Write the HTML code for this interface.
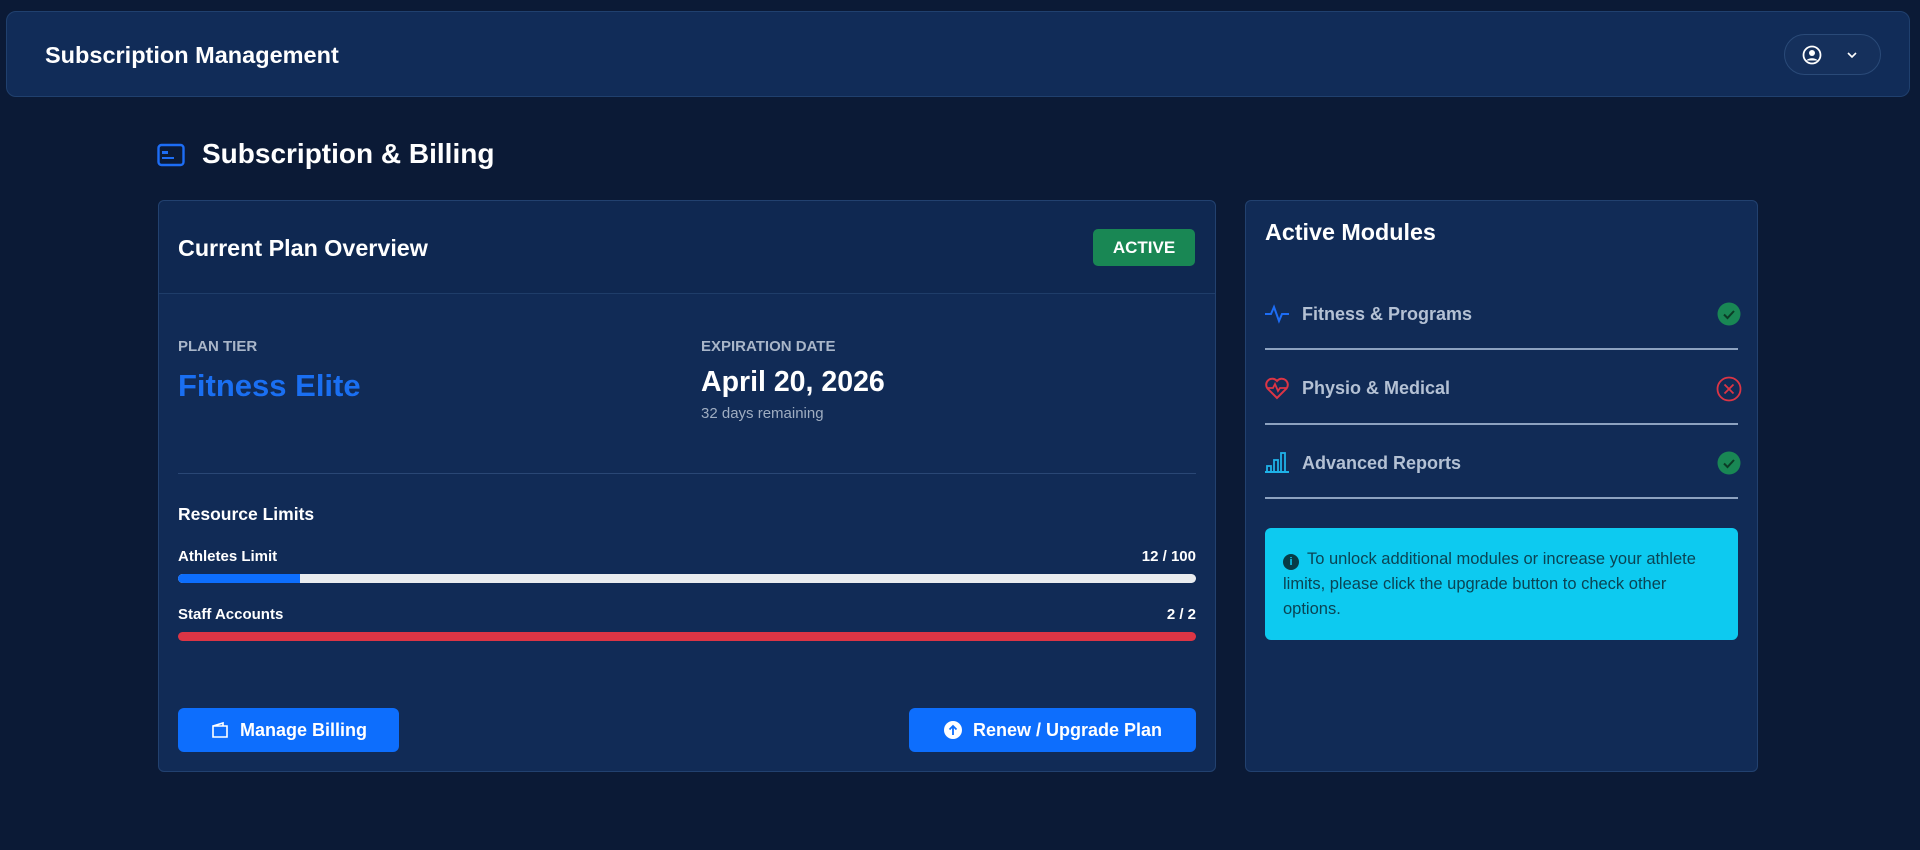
<!DOCTYPE html>
<html><head><meta charset="utf-8"><style>
*{box-sizing:border-box;margin:0;padding:0}
body{width:1920px;height:850px;background:#0b1a36;font-family:"Liberation Sans",sans-serif;color:#fff;position:relative;overflow:hidden}
.abs{position:absolute}
.hdr{left:6px;top:11px;width:1904px;height:86px;background:#112c58;border:1px solid #20406e;border-radius:10px}
.card{background:#112b56;border:1px solid #22416f;border-radius:6px}
.lbl{font-size:15px;font-weight:bold;color:#a9b6c9}
.bar{height:9px;border-radius:5px;left:178px;width:1018px}
.btn{background:#0d6efd;border-radius:6px;font-weight:bold;font-size:18px;display:flex;align-items:center;justify-content:center;gap:10px}
.mod{left:1265px;width:473px;height:0;border-top:2px solid #8da2c0}
.mt{font-size:18px;font-weight:bold;color:#b4c1d4;left:1302px}
</style></head><body>
<div class="abs hdr"></div>
<div class="abs" style="left:45px;top:42px;font-size:23.5px;font-weight:bold">Subscription Management</div>
<div class="abs" style="left:1784px;top:34px;width:97px;height:41px;border-radius:21px;background:#15305c;border:1px solid #2a4a78"></div>
<svg class="abs" style="left:1802px;top:45px" width="20" height="20" viewBox="0 0 20 20"><circle cx="10" cy="10" r="8.5" fill="none" stroke="#fff" stroke-width="1.8"/><circle cx="10" cy="8" r="3" fill="#fff"/><path d="M4.5 15.5c1.5-3 9.5-3 11 0" fill="#fff"/></svg>
<svg class="abs" style="left:1846px;top:50px" width="12" height="10" viewBox="0 0 12 10"><path d="M2 3l4 4 4-4" fill="none" stroke="#fff" stroke-width="1.6"/></svg>

<svg class="abs" style="left:157px;top:143px" width="28" height="24" viewBox="0 0 28 24"><rect x="1.5" y="2" width="25" height="20" rx="3" fill="none" stroke="#1d6df5" stroke-width="2.4"/><rect x="5" y="8" width="6" height="3" fill="#1d6df5"/><rect x="5" y="14" width="12" height="2" fill="#1d6df5"/></svg>
<div class="abs" style="left:202px;top:138px;font-size:28px;font-weight:bold">Subscription &amp; Billing</div>

<div class="abs card" style="left:158px;top:200px;width:1058px;height:572px"></div>
<div class="abs" style="left:159px;top:201px;width:1056px;height:93px;background:#0f2851;border-bottom:1px solid #1f3d69;border-radius:6px 6px 0 0"></div>
<div class="abs" style="left:178px;top:235px;font-size:23.3px;font-weight:bold">Current Plan Overview</div>
<div class="abs" style="left:1093px;top:229px;width:102px;height:37px;background:#198754;border-radius:5px;font-size:17px;font-weight:bold;display:flex;align-items:center;justify-content:center">ACTIVE</div>
<div class="abs lbl" style="left:178px;top:338px">PLAN TIER</div>
<div class="abs" style="left:178px;top:368px;font-size:31px;font-weight:bold;color:#1a6ff2">Fitness Elite</div>
<div class="abs lbl" style="left:701px;top:338px">EXPIRATION DATE</div>
<div class="abs" style="left:701px;top:366px;font-size:28.5px;font-weight:bold">April 20, 2026</div>
<div class="abs" style="left:701px;top:405px;font-size:15px;color:#9fadc1">32 days remaining</div>
<div class="abs" style="left:178px;top:473px;width:1018px;height:1px;background:#2a4775"></div>
<div class="abs" style="left:178px;top:504px;font-size:17.5px;font-weight:bold">Resource Limits</div>
<div class="abs" style="left:178px;top:548px;font-size:15px;font-weight:bold">Athletes Limit</div>
<div class="abs" style="left:1096px;top:548px;width:100px;text-align:right;font-size:15px;font-weight:bold">12 / 100</div>
<div class="abs bar" style="top:574px;background:#e9ecef"></div>
<div class="abs" style="left:178px;top:574px;width:122px;height:9px;border-radius:5px 0 0 5px;background:#0d6efd"></div>
<div class="abs" style="left:178px;top:606px;font-size:15px;font-weight:bold">Staff Accounts</div>
<div class="abs" style="left:1096px;top:606px;width:100px;text-align:right;font-size:15px;font-weight:bold">2 / 2</div>
<div class="abs bar" style="top:632px;background:#dc3545"></div>
<div class="abs btn" style="left:178px;top:708px;width:221px;height:44px"><svg width="20" height="20" viewBox="0 0 20 20"><path d="M3 6h14v11H3z M3 6l10-3v3" fill="none" stroke="#fff" stroke-width="1.6"/></svg>Manage Billing</div>
<div class="abs btn" style="left:909px;top:708px;width:287px;height:44px"><svg width="20" height="20" viewBox="0 0 20 20"><circle cx="10" cy="10" r="9" fill="#fff"/><path d="M10 15V6M6.5 9.5L10 6l3.5 3.5" fill="none" stroke="#0d6efd" stroke-width="1.8"/></svg>Renew / Upgrade Plan</div>

<div class="abs card" style="left:1245px;top:200px;width:513px;height:572px"></div>
<div class="abs" style="left:1265px;top:219px;font-size:23.3px;font-weight:bold">Active Modules</div>
<svg class="abs" style="left:1264px;top:304px" width="26" height="20" viewBox="0 0 26 20"><path d="M1 10h6l3-7 5 14 3-7h7" fill="none" stroke="#1d6df5" stroke-width="2"/></svg>
<div class="abs mt" style="left:1302px;top:304px">Fitness &amp; Programs</div>
<svg class="abs" style="left:1717px;top:302px" width="24" height="24" viewBox="0 0 24 24"><circle cx="12" cy="12" r="11.5" fill="#198754"/><path d="M7 12.5l3.5 3.5L17 9" fill="none" stroke="#0c3b26" stroke-width="2"/></svg>
<div class="abs mod" style="top:348px"></div>
<svg class="abs" style="left:1264px;top:376px" width="26" height="24" viewBox="0 0 26 24"><path d="M13 22L3.5 12.5A6 6 0 0113 5a6 6 0 019.5 7.5z" fill="none" stroke="#dc3545" stroke-width="2"/><path d="M4 12h5l2-4 3 7 2-3h6" fill="none" stroke="#dc3545" stroke-width="1.8"/></svg>
<div class="abs mt" style="left:1302px;top:378px">Physio &amp; Medical</div>
<svg class="abs" style="left:1716px;top:376px" width="26" height="26" viewBox="0 0 26 26"><circle cx="13" cy="13" r="11.5" fill="none" stroke="#dc3545" stroke-width="1.8"/><path d="M8.5 8.5l9 9M17.5 8.5l-9 9" stroke="#dc3545" stroke-width="1.8"/></svg>
<div class="abs mod" style="top:423px"></div>
<svg class="abs" style="left:1264px;top:450px" width="26" height="24" viewBox="0 0 26 24"><path d="M1 22h24" stroke="#1fb2e8" stroke-width="2"/><rect x="3" y="16" width="4" height="6" fill="none" stroke="#1fb2e8" stroke-width="1.8"/><rect x="10" y="10" width="4" height="12" fill="none" stroke="#1fb2e8" stroke-width="1.8"/><rect x="17" y="3" width="4" height="19" fill="none" stroke="#1fb2e8" stroke-width="1.8"/></svg>
<div class="abs mt" style="left:1302px;top:453px">Advanced Reports</div>
<svg class="abs" style="left:1717px;top:451px" width="24" height="24" viewBox="0 0 24 24"><circle cx="12" cy="12" r="11.5" fill="#198754"/><path d="M7 12.5l3.5 3.5L17 9" fill="none" stroke="#0c3b26" stroke-width="2"/></svg>
<div class="abs mod" style="top:497px"></div>
<div class="abs" style="left:1265px;top:528px;width:473px;height:112px;background:#0dcaf0;border-radius:6px;padding:19px 28px 0 18px;font-size:16.5px;line-height:25px;color:#0a4454">
<span style="display:inline-block;width:16px;height:16px;border-radius:50%;background:#073b46;color:#0dcaf0;font-size:11px;font-weight:bold;text-align:center;line-height:16px;vertical-align:-1px;margin-right:8px">i</span>To unlock additional modules or increase your athlete limits, please click the upgrade button to check other options.</div>
</body></html>
